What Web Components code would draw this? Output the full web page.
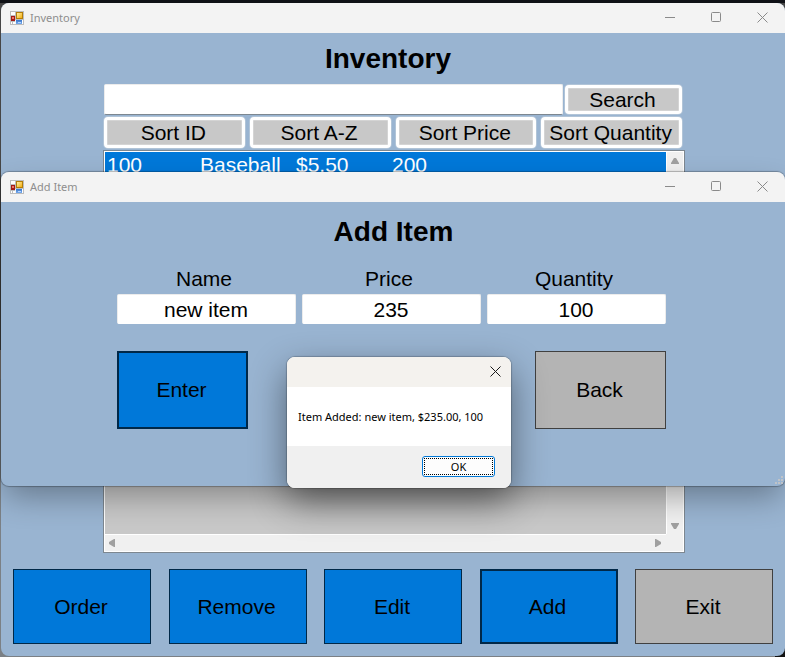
<!DOCTYPE html>
<html lang="en">
<head>
<meta charset="utf-8">
<title>Inventory</title>
<style>
html,body{margin:0;height:100%}
body{font-family:"Liberation Sans",Arial,sans-serif;font-size:21px;color:#000;overflow:hidden}
</style>
</head>
<body>
<inventory-desktop></inventory-desktop>
<script>
const define=(name,html,setup)=>{
  const t=document.createElement('template');
  t.innerHTML='<style>:host,*{box-sizing:border-box}button,input{font:inherit;color:inherit;margin:0}</style>'+html;
  customElements.define(name,class extends HTMLElement{
    constructor(){
      super();
      this.attachShadow({mode:'open'}).append(t.content.cloneNode(true));
    }
    connectedCallback(){ if(setup) setup(this,this.shadowRoot); }
  });
};

define('form-icon',`
<style>:host{display:block;width:14px;height:14px}svg{display:block}</style>
<svg width="14" height="14" viewBox="0 0 14 14" aria-hidden="true">
<defs>
<linearGradient id="y" x2="1" y2="1"><stop stop-color="#fff0a0"/><stop offset="1" stop-color="#f3ae12"/></linearGradient>
<linearGradient id="b" x2="0" y2="1"><stop stop-color="#3875c8"/><stop offset="1" stop-color="#78acee"/></linearGradient>
</defs>
<path d="M0 0h14v14H0z" fill="#bdbdbd"/>
<path d="M1 1h4v3H1zM1 11h1v2H1zM3 11h2v2H3zM12 9h1v4h-1z" fill="#fff"/>
<path d="M5 9h1v4H5z" fill="#f5f5f5"/>
<rect x="6" y="1" width="7" height="7" fill="#b47d08"/><rect x="7" y="2" width="5" height="5" fill="url(#y)"/>
<rect x="1" y="5" width="4" height="5" fill="#a41a14"/><rect x="2" y="6" width="2" height="2" fill="#ee7467"/>
<rect x="6" y="9" width="6" height="4" fill="url(#b)"/><path d="M8 11h3v1H8z" fill="#b7d5ff"/>
</svg>`);

define('app-window',`
<style>
:host{display:flex;flex-direction:column;background:#99b4d1;border-radius:8px;overflow:hidden}
header{display:flex;align-items:center;height:30px;flex:none;background:#f3f3f3;color:#8e8e8e;padding-left:9px;font:11px "Noto Sans",sans-serif}
.t{flex:1;padding:0 0 2px 6px}
button{width:46px;height:30px;padding:0 0 2px;border:0;background:none;display:grid;place-items:center}
svg{display:block;fill:none;stroke:#8a8a8a}
main{flex:1;display:flex;flex-direction:column;min-height:0}
</style>
<header><form-icon></form-icon><span class="t"></span>
<button aria-label="Minimize"><svg width="10" height="10"><path d="M0 5.5h10"/></svg></button>
<button aria-label="Maximize"><svg width="10" height="10"><rect x=".5" y=".5" width="9" height="9" rx="1"/></svg></button>
<button aria-label="Close"><svg width="11" height="11"><path d="M.5.5l10 10M10.5.5l-10 10"/></svg></button>
</header><main><slot></slot></main>`,(el,r)=>{r.querySelector('.t').textContent=el.getAttribute('caption');});

define('flat-button',`
<style>
:host{display:block;width:138px;height:75px}
button{width:100%;height:100%;border:1px solid #002848;background:#0078d9;padding:0 2px 0 0;border-radius:0}
:host([strong]) button{border-width:2px}
:host([gray]) button{background:#b4b4b4;border-color:#404040}
</style><button><slot></slot></button>`);

define('tool-button',`
<style>
:host{display:block;min-width:0;height:33px}
button{width:100%;height:100%;border:3px solid #fff;background:#c8c8c8;border-radius:4px;padding:0 2px 0 0;white-space:nowrap;box-shadow:inset 0 0 0 1px #d4d4d4,0 0 0 1px #c9d3de80}
</style><button><slot></slot></button>`);

define('text-field',`
<style>
:host{display:flex;flex-direction:column;text-align:center;min-width:0}
label{line-height:24px;padding:0 5px 3px 0}
input{width:100%;height:30px;border:1px solid #ececec;border-bottom-color:#fff;border-radius:2px;background:#fff;text-align:center;padding:2px 1px 0 0}
</style><label for="f"></label><input id="f">`,(el,r)=>{
  r.querySelector('label').textContent=el.getAttribute('label');
  r.querySelector('input').value=el.getAttribute('value');
});

define('item-list',`
<style>
:host{display:grid;grid-template:1fr 17px / 1fr 17px;border:1px solid #7d8790;padding:1px;background:#fff}
.rows{background:#c8c8c8;overflow:hidden}
.row{display:grid;grid-template-columns:93px 96px 96px 1fr;padding-left:2px;height:25px;line-height:25px;background:#0078d9;color:#fff;white-space:nowrap}
.v,.h{display:flex;justify-content:space-between;align-items:center;background:#f0f0f0}
.v{flex-direction:column;padding:6px 0 5px;border-left:1px solid #fff}
.h{padding:0 5px 0 4px;border-top:1px solid #fff}
.c{background:#f0f0f0}
svg{fill:#a0a0a0;display:block}
</style>
<div class="rows" role="listbox" aria-label="Items"><div class="row" role="option" aria-selected="true"><span>100</span><span>Baseball</span><span>$5.50</span><span>200</span></div></div>
<div class="v"><svg width="8" height="6"><path d="M3 0h2l3 5v1H0V5z"/></svg><svg width="8" height="6"><path d="M3 6h2l3-5V0H0v1z"/></svg></div>
<div class="h"><svg width="6" height="8"><path d="M0 3v2l5 3h1V0H5z"/></svg><svg width="6" height="8"><path d="M6 3v2L1 8H0V0h1z"/></svg></div>
<div class="c"></div>`);

define('inventory-form',`
<style>
:host{flex:1;display:flex;flex-direction:column}
h1{margin:0;font-size:28px;line-height:32px;text-align:center;padding:10px 10px 9px 0}
.mid{flex:1;display:flex;flex-direction:column;padding:0 100px 0 102px}
.search{display:grid;grid-template-columns:1fr 117px;gap:2px;height:31px;padding:0 3px 0 1px}
.search input{min-width:0;width:100%;height:31px;border:1px solid #ececec;border-bottom-color:#7d8790;border-radius:2px;background:#fff;padding:0 4px}
.search tool-button{height:29px;margin-top:1px}
.sorts{display:grid;grid-template-columns:repeat(4,1fr);gap:5px;padding:2px 3px 2px 1px}
.sorts tool-button{height:31px}
item-list{flex:1}
footer{display:flex;justify-content:space-between;padding:16px 12px 12px}
</style>
<h1>Inventory</h1>
<div class="mid">
<div class="search"><input aria-label="Search items"><tool-button>Search</tool-button></div>
<div class="sorts"><tool-button>Sort ID</tool-button><tool-button>Sort A-Z</tool-button><tool-button>Sort Price</tool-button><tool-button>Sort Quantity</tool-button></div>
<item-list></item-list>
</div>
<footer><flat-button>Order</flat-button><flat-button>Remove</flat-button><flat-button>Edit</flat-button><flat-button strong>Add</flat-button><flat-button gray>Exit</flat-button></footer>`);

define('add-form',`
<style>
:host{display:block;padding:14px 119px 57px 116px;position:relative}
h1{margin:0 0 17px;font-size:28px;line-height:32px;text-align:center;padding-left:4px}
.fields{display:grid;grid-template-columns:repeat(3,1fr);gap:6px;padding-top:2px}
.acts{display:flex;justify-content:space-between;margin-top:27px}
flat-button{width:131px;height:78px}
.grip{position:absolute;right:2px;bottom:2px;display:block;fill:#bfc3c8}
</style>
<h1>Add Item</h1>
<div class="fields"><text-field label="Name" value="new item"></text-field><text-field label="Price" value="235"></text-field><text-field label="Quantity" value="100"></text-field></div>
<div class="acts"><flat-button strong>Enter</flat-button><flat-button gray>Back</flat-button></div>
<svg class="grip" width="8" height="8"><path d="M6 0h2v2H6zM3 3h2v2H3zM6 3h2v2H6zM0 6h2v2H0zM3 6h2v2H3zM6 6h2v2H6z"/></svg>`);

define('message-box',`
<style>
:host{display:block;border-radius:8px;overflow:hidden;background:#fff;font:11px "Noto Sans",sans-serif}
header{height:30px;background:#f4f2ee;display:flex;justify-content:flex-end}
header button{width:31px;height:28px;border:0;background:none;padding:0;display:grid;place-items:center}
svg{stroke:#1a1a1a;fill:none;display:block}
p{margin:0;padding:20px 11px 19px;line-height:20px;white-space:nowrap}
footer{background:#f0f0f0;padding:10px 16px 11px;display:flex;justify-content:flex-end}
.ok{width:73px;height:21px;border:1px solid #0078d7;border-radius:3px;background:#fdfdfd;padding:1px}
.ok span{display:grid;place-items:center;height:100%;border:1px dotted #000;line-height:1}
</style>
<section role="alertdialog" aria-labelledby="m"><header><button aria-label="Close"><svg width="11" height="11"><path d="M.5.5l10 10M10.5.5l-10 10"/></svg></button></header>
<p id="m"><slot></slot></p>
<footer><button class="ok"><span>OK</span></button></footer></section>`);

define('inventory-desktop',`
<style>
:host{display:flex;position:relative;min-height:100vh;padding:3px 0 1px 1px;overflow:hidden;
background:linear-gradient(#0f1116,#0f1116) 0 0/100% 3px no-repeat,linear-gradient(#111,#111) 100% 100%/10px 12px no-repeat,linear-gradient(#464646 0 350px,#8a8580 350px 379px,#7b8085 379px)}
.main{flex:1}
.add{position:absolute;left:1px;right:0;top:172px;box-shadow:0 0 1px 1px #0004,0 14px 32px -4px #0005}
message-box{position:absolute;left:287px;top:357px;width:224px;box-shadow:0 0 1px 1px #0003,0 14px 36px #0007}
</style>
<app-window class="main" caption="Inventory"><inventory-form></inventory-form></app-window>
<app-window class="add" caption="Add Item"><add-form></add-form></app-window>
<message-box>Item Added: new item, $235.00, 100</message-box>`);
</script>
</body>
</html>
